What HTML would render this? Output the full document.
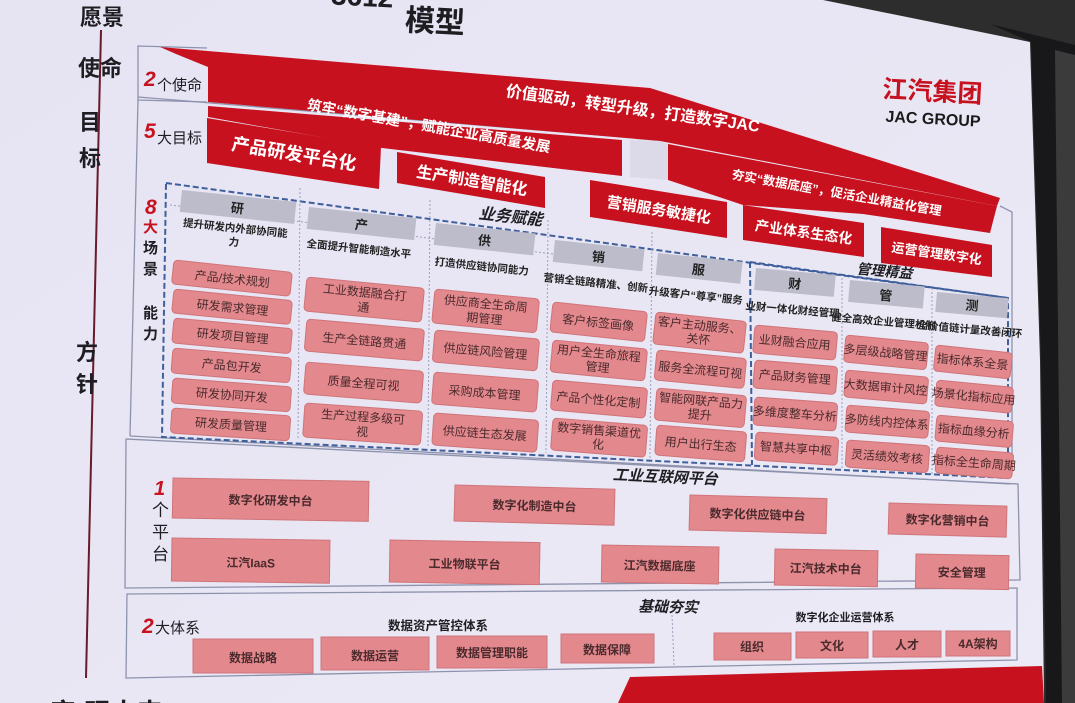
<!DOCTYPE html>
<html><head><meta charset="utf-8"><style>
html,body{margin:0;padding:0;width:1075px;height:703px;overflow:hidden;background:#e8e6f4}
svg{display:block}
text{font-family:"Liberation Sans","Noto Sans CJK SC",sans-serif}
.p{fill:#e3898e;stroke:#cf7479;stroke-width:1}
.t{fill:#4a2a2c;font-size:12px;text-anchor:middle}
.g{fill:#bdbccb}
.h{fill:#222;font-size:13px;font-weight:bold;text-anchor:middle}
.d{fill:#222;font-size:10.5px;text-anchor:middle}
.r{fill:#c8111e}
.w{fill:#fff;font-weight:bold;text-anchor:middle}
.k{fill:#1e1e22;text-anchor:middle;font-weight:bold}
.fr{fill:none;stroke:#8e93ad;stroke-width:1.3}
.ds{fill:none;stroke:#3f5f9c;stroke-width:2;stroke-dasharray:6 3}
.dt{fill:none;stroke:#9aa0bd;stroke-width:1;stroke-dasharray:2 2}
</style></head><body>
<svg width="1075" height="703" viewBox="0 0 1075 703" xmlns="http://www.w3.org/2000/svg">
<defs><linearGradient id="bg" x1="0" y1="0" x2="1" y2="1"><stop offset="0" stop-color="#e6e3f3"/><stop offset="1" stop-color="#eceaf6"/></linearGradient></defs>
<rect width="1075" height="703" fill="url(#bg)"/>

<line x1="101" y1="30" x2="86" y2="678" stroke="#6a1a2a" stroke-width="2"/>
<g font-weight="bold" fill="#1d1d22" font-size="22">
<text x="80" y="25">愿景</text>
<text x="78" y="76">使命</text>
<text x="79" y="130">目</text>
<text x="79" y="166">标</text>
<text x="76" y="360">方</text>
<text x="76" y="392">针</text>
<text x="50" y="722" font-size="26">实·现未来</text>
</g>
<g transform="rotate(3 400 20)" font-weight="bold" fill="#1d1d22">
<text x="330" y="8" font-size="28">3612”</text>
<text x="405" y="30" font-size="30">模型</text>
</g>

<polyline class="fr" points="207,48 138,46 138,100 207,102"/>
<polyline class="fr" points="1000,206 1012,212 1012,470"/>
<line class="fr" x1="138" y1="97" x2="660" y2="140"/>
<line class="fr" x1="138" y1="100" x2="130" y2="436"/>
<line class="fr" x1="130" y1="436" x2="1010" y2="484"/>
<polygon class="fr" points="126,439 1018,484 1020,580 125,588"/>
<polygon class="fr" points="127,594 1017,588 1017,660 126,678"/>

<polygon class="r" points="160,47 650,88 1000,198 997,206 660,141 208,102 208,67 176,54"/>
<polygon class="r" points="208,106 622,140 622,176 382,148 208,117"/>
<polygon class="r" points="207,118 381,147 379,189 207,163"/>
<polygon class="r" points="397,152 545,177 545,208 397,183"/>
<polygon class="r" points="590,180 727,202 727,238 590,217"/>
<polygon class="r" points="668,144 997,206 990,233 863,214 743,205 668,180"/>
<polygon class="r" points="743,205 864,223 864,257 743,240"/>
<polygon class="r" points="881,227 992,245 992,277 881,263"/>
<polygon points="660,141 668,144 668,180 630,177 630,140" fill="#dcdae8"/>

<g transform="translate(632,114) rotate(8)"><text class="w" font-size="16">价值驱动，转型升级，打造数字JAC</text></g>
<g transform="translate(428,131) rotate(10)"><text class="w" font-size="14.5">筑牢“数字基建”，赋能企业高质量发展</text></g>
<g transform="translate(293,160) rotate(9.5)"><text class="w" font-size="18">产品研发平台化</text></g>
<g transform="translate(471,186) rotate(9.5)"><text class="w" font-size="16">生产制造智能化</text></g>
<g transform="translate(658,215) rotate(9)"><text class="w" font-size="15">营销服务敏捷化</text></g>
<g transform="translate(836,197) rotate(10)"><text class="w" font-size="12.5">夯实“数据底座”，促活企业精益化管理</text></g>
<g transform="translate(803,237) rotate(8)"><text class="w" font-size="14">产业体系生态化</text></g>
<g transform="translate(936,258) rotate(8)"><text class="w" font-size="13">运营管理数字化</text></g>

<g transform="rotate(3 930 100)">
<text x="932" y="100" font-size="25" font-weight="bold" fill="#c8111e" text-anchor="middle">江汽集团</text>
<text x="934" y="124" font-size="16" font-weight="bold" fill="#1a1a1a" text-anchor="middle">JAC GROUP</text>
</g>

<g font-style="italic" font-weight="bold" fill="#c8111e">
<text x="144" y="86" font-size="21">2</text>
<text x="144" y="138" font-size="21">5</text>
<text x="145" y="214" font-size="21">8</text>
<text x="154" y="495" font-size="20">1</text>
<text x="142" y="633" font-size="21">2</text>
</g>
<g fill="#1d1d22" font-size="15">
<text x="157" y="90">个使命</text>
<text x="157" y="143">大目标</text>
<text x="155" y="633">大体系</text>
<text x="152" y="516" font-size="17">个</text>
<text x="152" y="538" font-size="17">平</text>
<text x="152" y="560" font-size="17">台</text>
</g>
<g font-size="15" font-weight="bold">
<text x="143" y="232" fill="#c8111e">大</text>
<text x="143" y="253" fill="#1d1d22">场</text>
<text x="143" y="274" fill="#1d1d22">景</text>
<text x="143" y="318" fill="#1d1d22">能</text>
<text x="143" y="339" fill="#1d1d22">力</text>
</g>

<polygon class="ds" points="166,183 1008,298 1008,478 162,437"/>
<line class="ds" x1="750" y1="262" x2="752" y2="465"/>
<line class="ds" x1="750" y1="262" x2="1008" y2="298"/>
<g class="dt">
<line x1="300" y1="188" x2="298" y2="440"/>
<line x1="430" y1="200" x2="428" y2="447"/>
<line x1="548" y1="220" x2="546" y2="453"/>
<line x1="652" y1="232" x2="650" y2="458"/>
<line x1="842" y1="278" x2="842" y2="470"/>
<line x1="932" y1="288" x2="932" y2="475"/>
<line x1="170" y1="205" x2="600" y2="260"/>
</g>
<g transform="translate(510,222) rotate(6)"><text class="k" font-size="16" font-style="italic">业务赋能</text></g>
<g transform="translate(884,276) rotate(5)"><text class="k" font-size="14" font-style="italic">管理精益</text></g>

<g transform="translate(182,190) rotate(6)"><rect class="g" width="115" height="22"/><text class="h" x="57" y="17">研</text><text class="d" x="57" y="36" font-weight="bold">提升研发内外部协同能</text><text class="d" x="57" y="50" font-weight="bold">力</text></g>
<g transform="translate(309,207) rotate(6)"><rect class="g" width="108" height="22"/><text class="h" x="54" y="17">产</text><text class="d" x="54" y="40" font-weight="bold">全面提升智能制造水平</text></g>
<g transform="translate(436,223) rotate(6)"><rect class="g" width="100" height="22"/><text class="h" x="50" y="17">供</text><text class="d" x="50" y="42" font-weight="bold">打造供应链协同能力</text></g>
<g transform="translate(555,240) rotate(6)"><rect class="g" width="90" height="22"/><text class="h" x="45" y="17">销</text><text class="d" x="45" y="42" font-size="8.5" font-weight="bold">营销全链路精准、创新</text></g>
<g transform="translate(658,253) rotate(6)"><rect class="g" width="85" height="22"/><text class="h" x="42" y="17">服</text><text class="d" x="42" y="42" font-size="8.5" font-weight="bold">升级客户“尊享”服务</text></g>
<g transform="translate(756,268) rotate(5)"><rect class="g" width="80" height="22"/><text class="h" x="40" y="17">财</text><text class="d" x="40" y="42" font-size="8" font-weight="bold">业财一体化财经管理</text></g>
<g transform="translate(850,280) rotate(5)"><rect class="g" width="75" height="22"/><text class="h" x="37" y="17">管</text><text class="d" x="37" y="42" font-size="7.5" font-weight="bold">健全高效企业管理机制</text></g>
<g transform="translate(937,292) rotate(5)"><rect class="g" width="72" height="20"/><text class="h" x="36" y="15">测</text><text class="d" x="36" y="38" font-size="7" font-weight="bold">全价值链计量改善闭环</text></g>

<g transform="translate(174,260) rotate(6)"><rect class="p" width="119" height="24" rx="4"/><text class="t" x="60" y="17" font-size="13">产品/技术规划</text></g>
<g transform="translate(174,289) rotate(5.6)"><rect class="p" width="119" height="24" rx="4"/><text class="t" x="60" y="17" font-size="13">研发需求管理</text></g>
<g transform="translate(174,318) rotate(5.2)"><rect class="p" width="119" height="25" rx="4"/><text class="t" x="60" y="17" font-size="13">研发项目管理</text></g>
<g transform="translate(173,348) rotate(4.8)"><rect class="p" width="119" height="25" rx="4"/><text class="t" x="60" y="17" font-size="13">产品包开发</text></g>
<g transform="translate(173,378) rotate(4.3)"><rect class="p" width="119" height="25" rx="4"/><text class="t" x="60" y="17" font-size="13">研发协同开发</text></g>
<g transform="translate(172,408) rotate(3.8)"><rect class="p" width="119" height="25" rx="4"/><text class="t" x="60" y="17" font-size="13">研发质量管理</text></g>
<g transform="translate(307,277) rotate(5.5)"><rect class="p" width="118" height="34" rx="4"/><text class="t" x="59" y="14" font-size="12.5">工业数据融合打</text><text class="t" x="59" y="29" font-size="12.5">通</text></g>
<g transform="translate(307,319) rotate(5)"><rect class="p" width="118" height="32" rx="4"/><text class="t" x="59" y="21" font-size="12.5">生产全链路贯通</text></g>
<g transform="translate(306,362) rotate(4.5)"><rect class="p" width="118" height="32" rx="4"/><text class="t" x="59" y="21" font-size="12.5">质量全程可视</text></g>
<g transform="translate(305,403) rotate(4)"><rect class="p" width="118" height="34" rx="4"/><text class="t" x="59" y="14" font-size="12.5">生产过程多级可</text><text class="t" x="59" y="29" font-size="12.5">视</text></g>
<g transform="translate(435,289) rotate(5.5)"><rect class="p" width="105" height="34" rx="4"/><text class="t" x="52" y="14">供应商全生命周</text><text class="t" x="52" y="29">期管理</text></g>
<g transform="translate(435,330) rotate(5)"><rect class="p" width="105" height="32" rx="4"/><text class="t" x="52" y="21">供应链风险管理</text></g>
<g transform="translate(434,372) rotate(4.5)"><rect class="p" width="105" height="32" rx="4"/><text class="t" x="52" y="21">采购成本管理</text></g>
<g transform="translate(434,413) rotate(4)"><rect class="p" width="105" height="32" rx="4"/><text class="t" x="52" y="21">供应链生态发展</text></g>
<g transform="translate(553,302) rotate(6)"><rect class="p" width="95" height="30" rx="4"/><text class="t" x="47" y="20" font-size="11">客户标签画像</text></g>
<g transform="translate(553,340) rotate(5.5)"><rect class="p" width="95" height="32" rx="4"/><text class="t" x="47" y="13" font-size="11">用户全生命旅程</text><text class="t" x="47" y="27" font-size="11">管理</text></g>
<g transform="translate(553,380) rotate(5)"><rect class="p" width="95" height="30" rx="4"/><text class="t" x="47" y="20" font-size="11">产品个性化定制</text></g>
<g transform="translate(553,418) rotate(4.5)"><rect class="p" width="95" height="32" rx="4"/><text class="t" x="47" y="13" font-size="11">数字销售渠道优</text><text class="t" x="47" y="27" font-size="11">化</text></g>
<g transform="translate(656,312) rotate(6)"><rect class="p" width="91" height="32" rx="4"/><text class="t" x="45" y="13" font-size="11">客户主动服务、</text><text class="t" x="45" y="27" font-size="11">关怀</text></g>
<g transform="translate(657,350) rotate(5.5)"><rect class="p" width="90" height="30" rx="4"/><text class="t" x="45" y="20" font-size="11">服务全流程可视</text></g>
<g transform="translate(657,388) rotate(5)"><rect class="p" width="90" height="32" rx="4"/><text class="t" x="45" y="13" font-size="11">智能网联产品力</text><text class="t" x="45" y="27" font-size="11">提升</text></g>
<g transform="translate(657,425) rotate(4.5)"><rect class="p" width="90" height="30" rx="4"/><text class="t" x="45" y="20" font-size="11">用户出行生态</text></g>
<g transform="translate(755,325) rotate(5)"><rect class="p" width="83" height="28" rx="4"/><text class="t" x="41" y="18" font-size="10">业财融合应用</text></g>
<g transform="translate(755,360) rotate(4.6)"><rect class="p" width="83" height="28" rx="4"/><text class="t" x="41" y="18" font-size="10">产品财务管理</text></g>
<g transform="translate(755,397) rotate(4.2)"><rect class="p" width="83" height="28" rx="4"/><text class="t" x="41" y="18" font-size="10">多维度整车分析</text></g>
<g transform="translate(756,432) rotate(3.8)"><rect class="p" width="83" height="28" rx="4"/><text class="t" x="41" y="18" font-size="10">智慧共享中枢</text></g>
<g transform="translate(846,335) rotate(5.5)"><rect class="p" width="83" height="27" rx="4"/><text class="t" x="41" y="18" font-size="9.5">多层级战略管理</text></g>
<g transform="translate(846,370) rotate(5)"><rect class="p" width="83" height="27" rx="4"/><text class="t" x="41" y="18" font-size="9.5">大数据审计风控</text></g>
<g transform="translate(847,405) rotate(4.5)"><rect class="p" width="83" height="27" rx="4"/><text class="t" x="41" y="18" font-size="9.5">多防线内控体系</text></g>
<g transform="translate(847,440) rotate(4)"><rect class="p" width="83" height="27" rx="4"/><text class="t" x="41" y="18" font-size="9.5">灵活绩效考核</text></g>
<g transform="translate(936,345) rotate(6)"><rect class="p" width="77" height="26" rx="4"/><text class="t" x="38" y="17" font-size="9">指标体系全景</text></g>
<g transform="translate(937,380) rotate(5.5)"><rect class="p" width="77" height="26" rx="4"/><text class="t" x="38" y="17" font-size="9">场景化指标应用</text></g>
<g transform="translate(937,415) rotate(5)"><rect class="p" width="77" height="26" rx="4"/><text class="t" x="38" y="17" font-size="9">指标血缘分析</text></g>
<g transform="translate(937,447) rotate(4.5)"><rect class="p" width="77" height="26" rx="4"/><text class="t" x="38" y="17" font-size="9">指标全生命周期</text></g>

<g transform="translate(665,482) rotate(2.5)"><text class="k" font-size="15" font-style="italic">工业互联网平台</text></g>
<g transform="translate(173,478) rotate(1)"><rect class="p" width="196" height="40"/><text class="t" x="98" y="25" font-size="13" font-weight="bold" fill="#222">数字化研发中台</text></g>
<g transform="translate(455,485) rotate(1.5)"><rect class="p" width="160" height="36"/><text class="t" x="80" y="23" font-size="12" font-weight="bold" fill="#222">数字化制造中台</text></g>
<g transform="translate(690,495) rotate(1.5)"><rect class="p" width="137" height="35"/><text class="t" x="68" y="22" font-size="11.5" font-weight="bold" fill="#222">数字化供应链中台</text></g>
<g transform="translate(889,503) rotate(1.5)"><rect class="p" width="118" height="31"/><text class="t" x="59" y="20" font-size="11" font-weight="bold" fill="#222">数字化营销中台</text></g>
<g transform="translate(172,538) rotate(0.8)"><rect class="p" width="158" height="43"/><text class="t" x="79" y="28" font-size="17" font-weight="bold" fill="#222">江汽IaaS</text></g>
<g transform="translate(390,540) rotate(1)"><rect class="p" width="150" height="42"/><text class="t" x="75" y="27" font-size="15" font-weight="bold" fill="#222">工业物联平台</text></g>
<g transform="translate(602,545) rotate(1)"><rect class="p" width="117" height="37"/><text class="t" x="58" y="24" font-size="14" font-weight="bold" fill="#222">江汽数据底座</text></g>
<g transform="translate(775,549) rotate(1)"><rect class="p" width="103" height="36"/><text class="t" x="51" y="23" font-size="13" font-weight="bold" fill="#222">江汽技术中台</text></g>
<g transform="translate(916,554) rotate(1)"><rect class="p" width="93" height="34"/><text class="t" x="46" y="22" font-size="12.5" font-weight="bold" fill="#222">安全管理</text></g>

<g transform="translate(668,612) rotate(1)"><text class="k" font-size="15" font-style="italic">基础夯实</text></g>
<text class="k" x="438" y="630" font-size="12.5">数据资产管控体系</text>
<text class="k" x="845" y="621" font-size="11">数字化企业运营体系</text>
<line class="dt" x1="672" y1="615" x2="674" y2="665"/>
<g><rect class="p" x="193" y="639" width="120" height="34"/><text class="t" x="253" y="662" font-size="15" font-weight="bold" fill="#222">数据战略</text></g>
<g><rect class="p" x="321" y="637" width="108" height="33"/><text class="t" x="375" y="660" font-size="15" font-weight="bold" fill="#222">数据运营</text></g>
<g><rect class="p" x="437" y="636" width="110" height="32"/><text class="t" x="492" y="657" font-size="13.5" font-weight="bold" fill="#222">数据管理职能</text></g>
<g><rect class="p" x="561" y="634" width="93" height="29"/><text class="t" x="607" y="654" font-size="13.5" font-weight="bold" fill="#222">数据保障</text></g>
<g><rect class="p" x="714" y="633" width="77" height="27"/><text class="t" x="752" y="651" font-size="12" font-weight="bold" fill="#222">组织</text></g>
<g><rect class="p" x="796" y="632" width="72" height="26"/><text class="t" x="832" y="650" font-size="12" font-weight="bold" fill="#222">文化</text></g>
<g><rect class="p" x="873" y="631" width="68" height="26"/><text class="t" x="907" y="649" font-size="12" font-weight="bold" fill="#222">人才</text></g>
<g><rect class="p" x="946" y="631" width="64" height="25"/><text class="t" x="978" y="648" font-size="11" font-weight="bold" fill="#222">4A架构</text></g>

<polygon class="r" points="630,677 1042,666 1044,703 618,703"/>

<polygon points="823,0 1075,0 1075,703 1044,703 1040,360 1030,42" fill="#2c2d2c"/>
<polygon points="990,24 1075,45 1075,703 1046,703 1041,360 1031,42" fill="#18181a"/>
<polygon points="1055,50 1075,55 1075,703 1062,703" fill="#3a3b3a"/>
</svg>
</body></html>
